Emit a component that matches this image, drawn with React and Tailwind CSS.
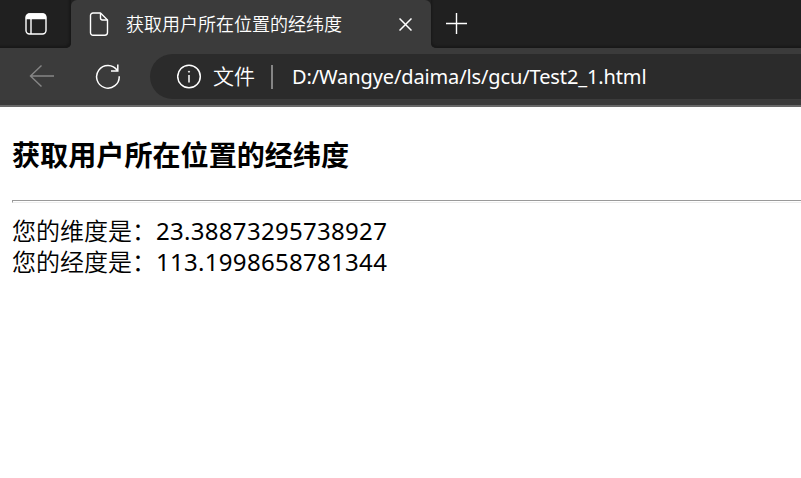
const cjk = "font-['Noto_Sans','Noto_Sans_CJK_SC',sans-serif]";

function TabStrip() {
  return (
    <div className="flex h-12 bg-[#3b3b3b]">
      <div className="flex w-[71px] shrink-0 items-start rounded-br-[5px] bg-[#202020] pl-[25px] pt-[13px] shadow-[inset_-2px_-2px_2px_#191919]">
        <svg className="h-[22px] w-[22px]" viewBox="0 0 22 22" fill="none" stroke="#fff" strokeWidth="1.4">
          <rect x="1" y="1" width="20" height="20" rx="3.5" />
          <path d="M1.5 5.500V4a3 3 0 0 1 3-3h13a3 3 0 0 1 3 3v1.500z" fill="#fff" />
          <path d="M6 6v15" />
        </svg>
      </div>
      <div className="flex w-[360px] shrink-0 bg-[#202020]">
        <div className="flex w-full items-start rounded-t-[6px] bg-[#3b3b3b]">
          <svg className="ml-[18px] mt-3 h-6 w-5" viewBox="0 0 20 24" fill="none" stroke="#fff" strokeWidth="1.4" strokeLinejoin="round">
            <path d="M4 1h7.500L18.500 8v12.500a2.700 2.700 0 0 1-2.700 2.700H4a2.500 2.500 0 0 1-2.500-2.500V3.500A2.500 2.500 0 0 1 4 1z" />
            <path d="M11.500 1v5a2 2 0 0 0 2 2h5" />
          </svg>
          <span className="ml-[17px] mt-[10px] whitespace-nowrap text-[18px] font-[350] leading-[26px] text-white font-['Noto_Sans_CJK_SC',sans-serif]">
            获取用户所在位置的经纬度
          </span>
          <svg className="ml-auto mr-[19px] mt-[18px] h-[13px] w-[13px]" viewBox="0 0 13 13" stroke="#fff" strokeWidth="1.5">
            <path d="M.5.5l12 12M12.500.5l-12 12" />
          </svg>
        </div>
      </div>
      <div className="flex flex-1 items-start rounded-bl-[5px] bg-[#202020] pl-[15px] pt-[13px] shadow-[inset_1px_-2px_2px_#191919]">
        <svg className="h-[21px] w-[21px]" viewBox="0 0 21 21" stroke="#fff" strokeWidth="1.4">
          <path d="M0 10.500h21M10.500 0v21" />
        </svg>
      </div>
    </div>
  );
}

function AddressBar() {
  return (
    <div className="flex h-[59px] items-start border-b-2 border-[#696969] bg-[#3b3b3b] pt-1.5">
      <svg className="ml-[29px] mt-[11px] h-[22px] w-[26px]" viewBox="0 0 26 22" fill="none" stroke="#868686" strokeWidth="1.4">
        <path d="M12.500.5L1.500 11l11 10.500M1.500 11H25" />
      </svg>
      <svg className="ml-[40px] mt-[9px] h-[27px] w-[26px]" viewBox="0 0 26 27" fill="none" stroke="#fff" strokeWidth="1.500">
        <path d="M24.200 13.200A11.300 11.300 0 1 1 22.300 7.500" />
        <path d="M22.800 1.500v6.500h-6.800" />
      </svg>
      <div className="ml-[29px] flex h-[45px] flex-1 items-start rounded-l-full bg-[#2b2b2b] pl-[27px] text-white">
        <svg className="mt-[10px] h-[25px] w-[25px] shrink-0" viewBox="0 0 25 25" fill="none" stroke="#fff" strokeWidth="1.500">
          <circle cx="12" cy="12.500" r="11.300" />
          <path d="M12 11v7.500" />
          <circle cx="12" cy="7.700" r=".6" fill="#fff" strokeWidth=".8" />
        </svg>
        <span className="ml-[11px] mt-[6px] whitespace-nowrap text-[21px] font-[350] leading-[30px] font-['Noto_Sans_CJK_SC',sans-serif]">文件</span>
        <div className="ml-4 mt-[11px] h-6 w-0.5 bg-[#858585]" />
        <span className="ml-[19px] mt-[8px] whitespace-nowrap text-[20px] leading-[30px] tracking-[-0.12px] font-['Noto_Sans',sans-serif]">
          D:/Wangye/daima/ls/gcu/Test2_1.html
        </span>
      </div>
    </div>
  );
}

export default function App() {
  return (
    <div className="h-[478px] w-[801px] overflow-hidden bg-white">
      <TabStrip />
      <AddressBar />
      <main className={`pl-3 text-black ${cjk}`}>
        <h3 className="whitespace-nowrap pt-[28px] text-[28.1px] font-bold leading-[40px]">获取用户所在位置的经纬度</h3>
        <div className="mt-[25px] h-[3px] border-b border-l border-t border-b-[#eeeeee] border-l-[#9a9a9a] border-t-[#9a9a9a]" />
        <div className="mt-[12px] whitespace-nowrap text-[24px] leading-[31px]">
          <p><span className="font-[350]">您的维度是：</span><span className="tracking-[0.3px]">23.38873295738927</span></p>
          <p><span className="font-[350]">您的经度是：</span><span className="tracking-[0.3px]">113.1998658781344</span></p>
        </div>
      </main>
    </div>
  );
}
